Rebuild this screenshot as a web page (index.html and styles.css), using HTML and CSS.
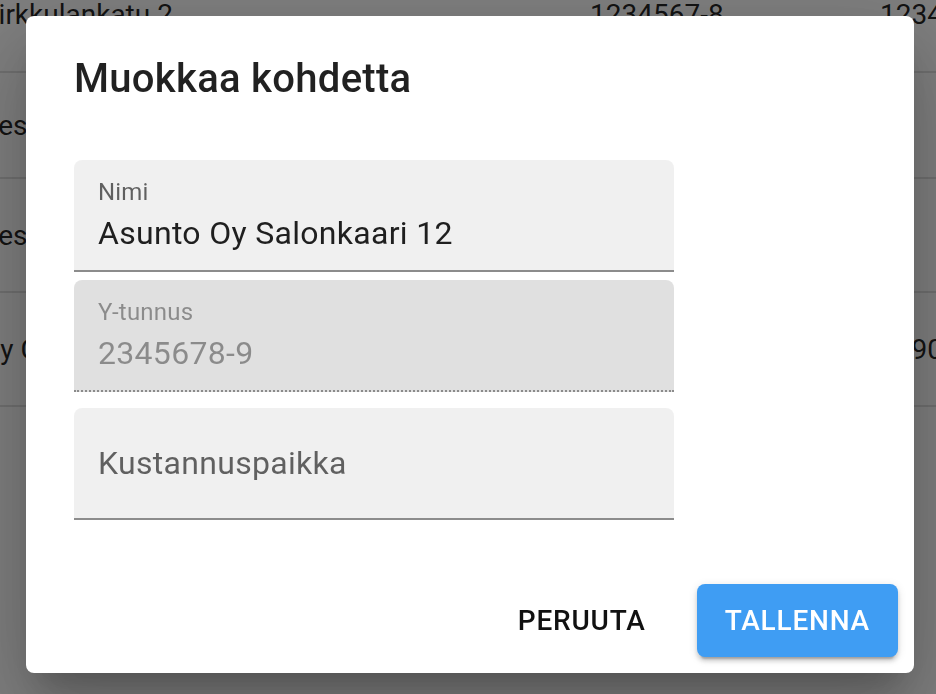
FILE: index.html
```html
<!DOCTYPE html>
<html>
  <head>
    <meta charset="utf-8" />
    <title>Muokkaa kohdetta</title>
    <link rel="stylesheet" href="styles.css">
  </head>
  <body>
    <main class="page">
      <table class="objects">
        <colgroup>
          <col class="col-name" />
          <col class="col-id" />
          <col class="col-extra" />
        </colgroup>
        <tbody>
          <tr class="row">
            <td>Kirkkulankatu 2</td>
            <td>1234567-8</td>
            <td>1234567-8</td>
          </tr>
          <tr class="row short">
            <td>Keskuskatu 5</td>
            <td>2345678-9</td>
            <td>12</td>
          </tr>
          <tr class="row">
            <td>Keskustie 3</td>
            <td>3456789-0</td>
            <td>14</td>
          </tr>
          <tr class="row">
            <td>Oy Citytalo</td>
            <td>4567890-1</td>
            <td>1290,50</td>
          </tr>
        </tbody>
      </table>
    </main>

    <div class="backdrop"></div>

    <div class="dialog-wrap">
      <div class="dialog" role="dialog">
        <h2 class="dialog-title">Muokkaa kohdetta</h2>
        <div class="dialog-content">
          <div class="field field-name">
            <label class="field-label" for="name">Nimi</label>
            <input class="field-input" id="name" type="text" value="Asunto Oy Salonkaari 12" />
          </div>
          <div class="field field-disabled">
            <label class="field-label" for="ytunnus">Y-tunnus</label>
            <input class="field-input" id="ytunnus" type="text" value="2345678-9" disabled />
          </div>
          <div class="field field-empty">
            <label class="field-label" for="cost">Kustannuspaikka</label>
          </div>
        </div>
        <div class="dialog-actions">
          <button class="btn btn-text">Peruuta</button>
          <button class="btn btn-primary">Tallenna</button>
        </div>
      </div>
    </div>
  </body>
</html>
```

FILE: styles.css
```css
html,
body {
  margin: 0;
  height: 100%;
  overflow: hidden;
  background-color: #ffffff;
  font-family: Roboto, "Liberation Sans", sans-serif;
  color: rgba(0, 0, 0, 0.87);
}
*,
*:before,
*:after {
  box-sizing: border-box;
}

/* table behind the dialog */
.objects {
  table-layout: fixed;
  border-collapse: collapse;
  width: 1099px;
  margin: -42px 0 0 -19px;
  font-size: 28px;
}
.col-name {
  width: 609px;
}
.col-id {
  width: 290px;
}
.col-extra {
  width: 200px;
}
.row td {
  height: 114px;
  padding: 0;
  white-space: nowrap;
  vertical-align: middle;
  border-bottom: 2px solid #e0e0e0;
}
.row.short td {
  height: 106px;
}

.backdrop {
  position: fixed;
  inset: 0;
  background-color: rgba(0, 0, 0, 0.5);
}

/* dialog */
.dialog-wrap {
  position: fixed;
  inset: 0;
  padding: 16px 0 0 26px;
}
.dialog {
  width: 888px;
  background-color: #ffffff;
  border-radius: 8px;
  box-shadow: 0 22px 30px -14px rgba(0, 0, 0, 0.2),
    0 48px 76px 6px rgba(0, 0, 0, 0.14), 0 18px 92px 16px rgba(0, 0, 0, 0.12);
}
.dialog-title {
  margin: 0;
  padding: 31px 48px 33px;
  font-size: 40px;
  font-weight: 500;
  line-height: 64px;
  letter-spacing: 0.3px;
}
.dialog-content {
  padding: 16px 48px 48px;
}

.field {
  width: 600px;
  height: 112px;
  padding: 14px 24px 0;
  border-radius: 8px 8px 0 0;
  background-color: rgba(0, 0, 0, 0.06);
  border-bottom: 2px solid rgba(0, 0, 0, 0.42);
}
.field + .field {
  margin-top: 8px;
}
.field-disabled {
  background-color: rgba(0, 0, 0, 0.12);
  border-bottom: 2px dotted rgba(0, 0, 0, 0.38);
}
.field-disabled + .field {
  margin-top: 16px;
}
.field-label {
  display: block;
  font-size: 24px;
  line-height: 36px;
  letter-spacing: 0.2px;
  color: rgba(0, 0, 0, 0.6);
}
.field-input {
  display: block;
  width: 100%;
  height: 46px;
  padding: 0;
  border: 0;
  outline: none;
  background-color: transparent;
  font-family: inherit;
  font-size: 32px;
  letter-spacing: 0.3px;
  color: rgba(0, 0, 0, 0.87);
}
.field-disabled .field-label,
.field-disabled .field-input {
  color: rgba(0, 0, 0, 0.38);
}
.field-empty {
  padding-top: 32px;
}
.field-empty .field-label {
  font-size: 32px;
  line-height: 46px;
  letter-spacing: 0.3px;
}

.dialog-actions {
  display: flex;
  justify-content: flex-end;
  align-items: center;
  gap: 35px;
  padding: 16px;
}
.btn {
  border: 0;
  border-radius: 8px;
  padding: 12px 16px;
  font-family: inherit;
  font-size: 28px;
  font-weight: 500;
  line-height: 49px;
  letter-spacing: 0.8px;
  text-transform: uppercase;
  background-color: transparent;
  color: #111111;
}
.btn-primary {
  padding: 12px 28px;
  background-color: #3f9df3;
  color: #ffffff;
  box-shadow: 0 6px 2px -4px rgba(0, 0, 0, 0.2), 0 4px 4px 0 rgba(0, 0, 0, 0.14),
    0 2px 10px 0 rgba(0, 0, 0, 0.12);
}
```
